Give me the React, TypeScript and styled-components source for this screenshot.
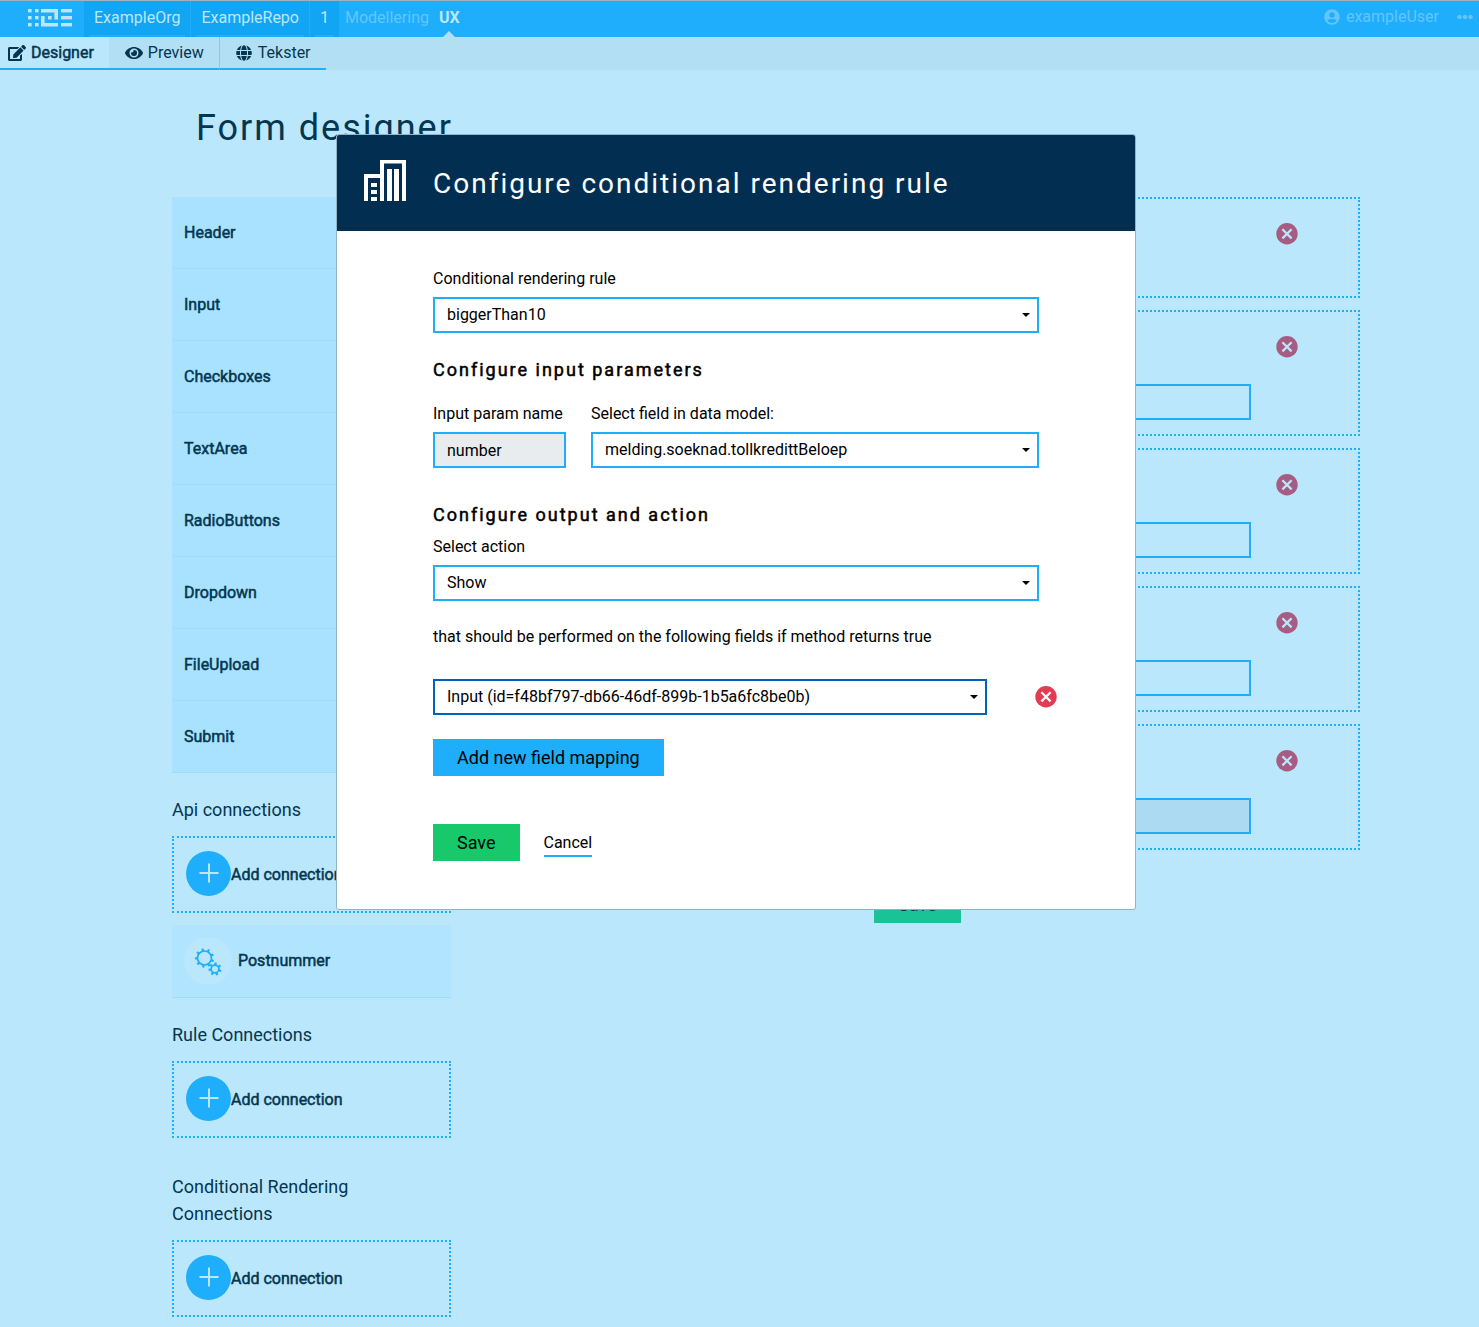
import React from 'react';
import styled, { createGlobalStyle } from 'styled-components';
import { FaEdit, FaEye, FaGlobe, FaUserCircle, FaEllipsisH } from 'react-icons/fa';

const color = {
  primary: '#1eaefb',
  dimPage: '#bbe7fc',
  dimText: '#043650',
  dimBar: '#b2dff3',
  navy: '#022f51',
};

const GlobalStyle = createGlobalStyle`
  *, *::before, *::after { box-sizing: border-box; }
  body {
    margin: 0;
    background: ${color.dimPage};
    color: ${color.dimText};
    font: 400 16px/24px Roboto, "Liberation Sans", sans-serif;
  }
  h1, h2, h3, ul { margin: 0; padding: 0; font-weight: 400; }
  ul { list-style: none; }
  button, input, select { font: inherit; color: inherit; border-radius: 0; margin: 0; }
  button { cursor: pointer; }
  a { color: inherit; text-decoration: none; }
  svg { display: block; }
`;

const Page = styled.div`
  height: 100vh;
  overflow: hidden;
`;

const TopBar = styled.header`
  display: flex;
  align-items: stretch;
  height: 37px;
  padding-right: 6px;
  border-top: 1px solid #a3b1bc;
  background: ${color.primary};
  color: #bbe7fc;
`;

const LogoLink = styled.a`
  display: flex;
  align-items: center;
  width: 84px;
  padding: 0 0 2px 28px;
`;

const Crumb = styled.a`
  display: flex;
  flex-direction: column;
  align-items: center;
  padding: 5px 5px 0;
  background: #12a5f4;
  border-right: 1px solid #1eaefb;
  &::after {
    content: '';
    width: 100%;
    height: 2px;
    margin-top: auto;
    background: #1eaefb;
  }
  span { padding: 0 5px; }
`;

const Mode = styled.a<{ $active?: boolean }>`
  position: relative;
  padding: 5px 5px 0;
  font-weight: ${p => (p.$active ? 700 : 400)};
  color: ${p => (p.$active ? '#bbe7fc' : '#63c5fb')};
  &::after {
    content: '';
    display: ${p => (p.$active ? 'block' : 'none')};
    position: absolute;
    left: 50%;
    bottom: 0;
    margin-left: -6px;
    border: 6px solid transparent;
    border-top: 0;
    border-bottom-color: ${color.dimBar};
  }
`;

const Account = styled.div`
  display: flex;
  align-items: center;
  gap: 6px;
  margin-left: auto;
  padding-bottom: 4px;
  color: #63c5fb;
`;

const MoreButton = styled.button`
  margin-left: 12px;
  padding: 0;
  border: 0;
  background: none;
`;

const SubNav = styled.nav`
  display: flex;
  height: 33px;
  background: ${color.dimBar};
`;

const SubTab = styled.a<{ $active?: boolean }>`
  display: flex;
  align-items: center;
  gap: 5px;
  padding: ${p => (p.$active ? '1px 15px 0 8px' : '1px 15px 0 16px')};
  border-bottom: 2px solid ${color.primary};
  background: ${p => (p.$active ? color.dimPage : 'transparent')};
  -webkit-text-stroke: ${p => (p.$active ? '0.5px' : '0')};
  & + & + & {
    gap: 6px;
    border-left: 1px solid #93c7de;
  }
`;

const Main = styled.main`
  padding: 37px 119px 0 172px;
`;

const PageTitle = styled.h1`
  padding-left: 24px;
  font-size: 36px;
  line-height: 43px;
  font-weight: 400;
  letter-spacing: 2px;
`;

const Columns = styled.div`
  display: grid;
  grid-template-columns: 279px 1fr;
  gap: 24px;
  align-items: start;
  margin-top: 47px;
`;

const Palette = styled.ul`
  margin-bottom: 23px;
`;

const Strong = styled.span`
  -webkit-text-stroke: 0.5px;
`;

const PaletteItem = styled.li`
  height: 72px;
  padding: 24px 12px;
  border-bottom: 1px solid #9edcfd;
  background: #a9e2ff;
`;

const SectionTitle = styled.h2`
  margin-bottom: 13px;
  font-size: 18px;
  line-height: 27px;
`;

const ConnectionSection = styled.section`
  margin-bottom: 35px;
  &:nth-of-type(1) { margin-bottom: 23px; }
`;

const AddConnection = styled.button`
  display: flex;
  align-items: center;
  width: 100%;
  height: 77px;
  padding: 0 12px;
  border: 2px dotted ${color.primary};
  background: none;
`;

const Connection = styled.div`
  display: flex;
  align-items: center;
  gap: 6px;
  height: 73px;
  margin-top: 12px;
  padding: 0 12px;
  border-bottom: 1px solid #9edcfd;
  background: #b1e4fe;
`;

const Canvas = styled.div`
  display: grid;
  gap: 12px;
  justify-items: center;
`;

const FormItem = styled.section<{ $short?: boolean }>`
  display: grid;
  grid-template-columns: 1fr 22px;
  column-gap: 25px;
  align-content: start;
  width: 100%;
  height: ${p => (p.$short ? '101px' : '126px')};
  padding: 24px 60px 14px 24px;
  border: 2px dotted ${color.primary};
`;

const IconButton = styled.button`
  grid-column: 2;
  width: 22px;
  height: 22px;
  padding: 0;
  border: 0;
  background: none;
`;

const PreviewInput = styled.input<{ $filled?: boolean }>`
  grid-column: 1;
  width: 100%;
  height: 36px;
  margin-top: 26px;
  padding: 0 12px;
  border: 2px solid ${color.primary};
  background: ${p => (p.$filled ? '#acdaf2' : 'transparent')};
`;

const Button = styled.button<{ $tone: string }>`
  height: 37px;
  padding: 0 24px;
  border: 0;
  background: ${p => p.$tone};
  font-size: 18px;
  line-height: 27px;
`;

const CanvasActions = styled.div`
  margin-top: 24px;
`;

const Overlay = styled.div`
  position: fixed;
  inset: 0;
  display: flex;
  justify-content: center;
  align-items: flex-start;
  padding: 134px 7px 0 0;
`;

const Dialog = styled.div`
  width: 800px;
  border: 1px solid #8fb4c8;
  border-radius: 3px;
  background: #fff;
  color: #000;
  overflow: hidden;
`;

const DialogHeader = styled.div`
  display: flex;
  align-items: flex-start;
  gap: 27px;
  height: 96px;
  padding: 25px 0 0 27px;
  background: ${color.navy};
  color: #fff;
`;

const DialogTitle = styled.h2`
  font-size: 28px;
  line-height: 48px;
  letter-spacing: 2px;
`;

const DialogBody = styled.form`
  padding: 36px 96px 48px;
`;

const Field = styled.div`
  display: flex;
  flex-direction: column;
  gap: 6px;
`;

const ParamRow = styled.div`
  display: grid;
  grid-template-columns: 133px 1fr;
  gap: 25px;
  margin-top: 19px;
`;

const DialogHeading = styled.h3`
  margin-top: 23px;
  font-size: 18px;
  line-height: 27px;
  font-weight: 400;
  letter-spacing: 2px;
  -webkit-text-stroke: 0.5px;
`;

const OutputHeading = styled(DialogHeading)`
  margin: 33px 0 7px;
`;

const SelectBox = styled.div<{ $focus?: boolean }>`
  display: grid;
  align-items: center;
  height: 36px;
  border: 2px solid ${p => (p.$focus ? '#0062ba' : color.primary)};
  svg {
    grid-area: 1 / 1;
    justify-self: end;
    margin-right: 7px;
    pointer-events: none;
  }
`;

const NativeSelect = styled.select`
  grid-area: 1 / 1;
  appearance: none;
  width: 100%;
  height: 32px;
  padding: 0 24px 1px 12px;
  border: 0;
  outline: 0;
  background: none;
`;

const ParamInput = styled.input`
  width: 100%;
  height: 36px;
  padding: 0 12px;
  border: 2px solid ${color.primary};
  background: #e9ecef;
`;

const Note = styled.p`
  margin: 24px 0 30px;
`;

const MappingRow = styled.div`
  display: grid;
  grid-template-columns: 554px 22px;
  gap: 48px;
  align-items: center;
  margin-bottom: 24px;
`;

const DialogActions = styled.div`
  display: flex;
  align-items: center;
  gap: 24px;
  margin-top: 48px;
`;

const CancelLink = styled.a`
  padding-top: 3px;
  border-bottom: 2px solid ${color.primary};
`;

const Logo = () => (
  <svg width="44" height="18" viewBox="0 0 44 18" fill="currentColor" aria-hidden="true">
    {[0, 7, 14].map(y => (
      <g key={y}>
        <rect x="0" y={y} width="3.6" height="3.4" />
        <rect x="7" y={y} width="3.6" height="3.4" />
        <rect x="33" y={y} width="11" height="3.4" />
      </g>
    ))}
    <path d="M13 0h17v10.400h-3.600V3.400H13zM13 7h3.600v7h13.400v3.400H13zM20 7h3.600v3.400H20z" />
  </svg>
);

const RemoveIcon = ({ fill, cross }: { fill: string; cross: string }) => (
  <svg width="22" height="22" viewBox="0 0 22 22" aria-hidden="true">
    <circle cx="11" cy="10.8" r="10.7" fill={fill} />
    <path d="M6.4 6.2l9.200 9.200M15.600 6.200l-9.200 9.200" stroke={cross} strokeWidth="2.200" />
  </svg>
);

const PlusIcon = () => (
  <svg width="45" height="47" viewBox="0 0 45 47" aria-hidden="true">
    <circle cx="22.5" cy="22.5" r="22.5" fill={color.primary} />
    <path d="M23 12.5v19M13.500 22h19" stroke="#bbe7fc" strokeWidth="2" />
  </svg>
);

type GearProps = { cx: number; cy: number; r: number; teeth: number; tooth: number; turn: number };

const Gear = ({ cx, cy, r, teeth, tooth, turn }: GearProps) => (
  <g stroke={color.primary} fill="none">
    <circle cx={cx} cy={cy} r={r} strokeWidth="1.7" />
    {Array.from({ length: teeth }, (_, i) => (
      <path
        key={i}
        d={`M${cx} ${cy - r}v${-tooth}`}
        strokeWidth="2.2"
        transform={`rotate(${turn + (i * 360) / teeth} ${cx} ${cy})`}
      />
    ))}
  </g>
);

const GearsIcon = () => (
  <svg width="48" height="48" viewBox="0 0 48 48" aria-hidden="true">
    <circle cx="24" cy="24" r="24" fill="#bae7fc" />
    <Gear cx={20.5} cy={21} r={7} teeth={9} tooth={2.6} turn={-12} />
    <Gear cx={31} cy={32} r={3.9} teeth={7} tooth={2.6} turn={5} />
  </svg>
);

const BuildingIcon = () => (
  <svg width="42" height="42" viewBox="0 0 42 42" fill="#fff" aria-hidden="true">
    <path d="M16 0h26v41h-4V3.500H20V41h-4V18H4v23H0V14h16z" />
    <path d="M7 23h6v4H7zM7 30h6v4H7zM7 37h6v4H7zM23 9h5v32H23zM30 9h5v32H30z" />
  </svg>
);

const Caret = () => (
  <svg width="8" height="4" viewBox="0 0 8 4" aria-hidden="true">
    <path d="M0 0h8L4 4z" />
  </svg>
);

type SelectProps = { id: string; value: string; focus?: boolean; label?: string };

const Select = ({ id, value, focus, label }: SelectProps) => (
  <SelectBox $focus={focus}>
    <NativeSelect id={id} aria-label={label} defaultValue={value}>
      <option>{value}</option>
    </NativeSelect>
    <Caret />
  </SelectBox>
);

const components = ['Header', 'Input', 'Checkboxes', 'TextArea', 'RadioButtons', 'Dropdown', 'FileUpload', 'Submit'];

const formItems = [
  { name: 'Header', input: false, filled: false },
  { name: 'Input 1', input: true, filled: false },
  { name: 'Input 2', input: true, filled: false },
  { name: 'Input 3', input: true, filled: false },
  { name: 'Input 4', input: true, filled: true },
];

const AddConnectionButton = () => (
  <AddConnection type="button">
    <PlusIcon />
    <Strong>Add connection</Strong>
  </AddConnection>
);

export default function App() {
  return (
    <Page>
      <GlobalStyle />
      <TopBar>
        <LogoLink href="#" aria-label="Home"><Logo /></LogoLink>
        <Crumb href="#"><span>ExampleOrg</span></Crumb>
        <Crumb href="#"><span>ExampleRepo</span></Crumb>
        <Crumb href="#"><span>1</span></Crumb>
        <Mode href="#">Modellering</Mode>
        <Mode href="#" $active>UX</Mode>
        <Account>
          <FaUserCircle size={16} />
          <span>exampleUser</span>
          <MoreButton type="button" aria-label="More"><FaEllipsisH size={16} /></MoreButton>
        </Account>
      </TopBar>
      <SubNav>
        <SubTab href="#" $active><FaEdit size={18} /><span>Designer</span></SubTab>
        <SubTab href="#"><FaEye size={18} /><span>Preview</span></SubTab>
        <SubTab href="#"><FaGlobe size={16} /><span>Tekster</span></SubTab>
      </SubNav>

      <Main>
        <PageTitle>Form designer</PageTitle>
        <Columns>
          <div>
            <Palette>
              {components.map(name => (
                <PaletteItem key={name}><Strong>{name}</Strong></PaletteItem>
              ))}
            </Palette>
            <ConnectionSection>
              <SectionTitle>Api connections</SectionTitle>
              <AddConnectionButton />
              <Connection>
                <GearsIcon />
                <Strong>Postnummer</Strong>
              </Connection>
            </ConnectionSection>
            <ConnectionSection>
              <SectionTitle>Rule Connections</SectionTitle>
              <AddConnectionButton />
            </ConnectionSection>
            <ConnectionSection>
              <SectionTitle>Conditional Rendering Connections</SectionTitle>
              <AddConnectionButton />
            </ConnectionSection>
          </div>
          <Canvas>
            {formItems.map(item => (
              <FormItem key={item.name} $short={!item.input}>
                <IconButton type="button" aria-label={`Remove ${item.name}`}>
                  <RemoveIcon fill="#a75d83" cross="#bbe7fc" />
                </IconButton>
                {item.input && <PreviewInput aria-label={item.name} $filled={item.filled} />}
              </FormItem>
            ))}
            <CanvasActions>
              <Button type="button" $tone="#1ac298">Save</Button>
            </CanvasActions>
          </Canvas>
        </Columns>
      </Main>

      <Overlay>
        <Dialog role="dialog" aria-labelledby="dialog-title">
          <DialogHeader>
            <BuildingIcon />
            <DialogTitle id="dialog-title">Configure conditional rendering rule</DialogTitle>
          </DialogHeader>
          <DialogBody onSubmit={e => e.preventDefault()}>
            <Field>
              <label htmlFor="rule">Conditional rendering rule</label>
              <Select id="rule" value="biggerThan10" />
            </Field>
            <DialogHeading>Configure input parameters</DialogHeading>
            <ParamRow>
              <Field>
                <label htmlFor="param">Input param name</label>
                <ParamInput id="param" defaultValue="number" readOnly />
              </Field>
              <Field>
                <label htmlFor="model-field">Select field in data model:</label>
                <Select id="model-field" value="melding.soeknad.tollkredittBeloep" />
              </Field>
            </ParamRow>
            <OutputHeading>Configure output and action</OutputHeading>
            <Field>
              <label htmlFor="action">Select action</label>
              <Select id="action" value="Show" />
            </Field>
            <Note>that should be performed on the following fields if method returns true</Note>
            <MappingRow>
              <Select id="mapping" label="Field" value="Input (id=f48bf797-db66-46df-899b-1b5a6fc8be0b)" focus />
              <IconButton type="button" aria-label="Remove field mapping">
                <RemoveIcon fill="#e23b53" cross="#fff" />
              </IconButton>
            </MappingRow>
            <Button type="button" $tone={color.primary}>Add new field mapping</Button>
            <DialogActions>
              <Button type="submit" $tone="#17c96b">Save</Button>
              <CancelLink href="#">Cancel</CancelLink>
            </DialogActions>
          </DialogBody>
        </Dialog>
      </Overlay>
    </Page>
  );
}
